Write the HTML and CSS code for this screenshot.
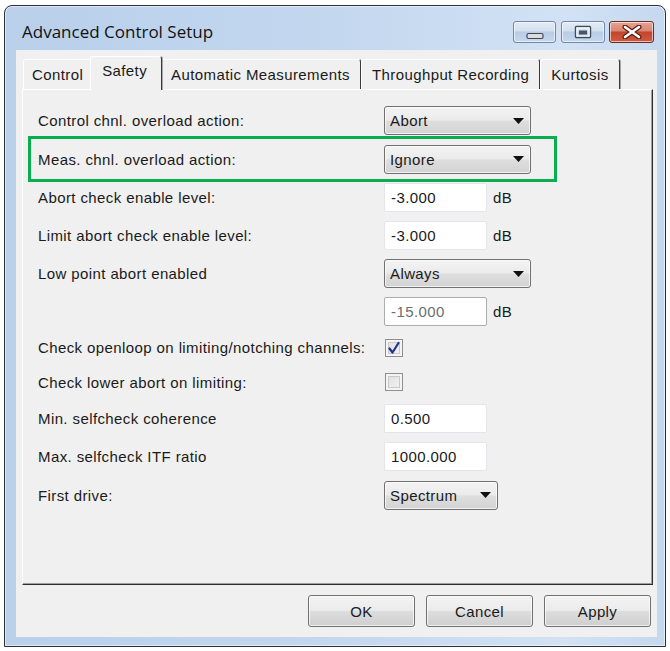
FILE: index.html
```html
<!DOCTYPE html>
<html>
<head>
<meta charset="utf-8">
<link rel="stylesheet" href="styles.css">
</head>
<body>
<div class="window">
  <div class="titlebar">
    <div class="title">Advanced Control Setup</div>
    <div class="caption-buttons">
      <div class="cbtn cbtn-min">
        <svg width="18" height="8" viewBox="0 0 18 8"><rect x="1" y="1.5" width="16" height="5" rx="1.5" fill="#dcdcdc" stroke="#3f4a58" stroke-width="1.2"/></svg>
      </div>
      <div class="cbtn cbtn-max">
        <svg width="18" height="14" viewBox="0 0 18 14"><rect x="1.5" y="1.5" width="15" height="11" rx="1" fill="none" stroke="#3f4a58" stroke-width="1.4"/><rect x="3" y="3" width="12" height="8" fill="none" stroke="#f4f6f8" stroke-width="1.4"/><rect x="5" y="5.5" width="8" height="4" fill="#4a5666"/></svg>
      </div>
      <div class="cbtn cbtn-close">
        <svg width="20" height="14" viewBox="0 0 20 14"><path d="M3 2 L17 12 M17 2 L3 12" stroke="#5a1e14" stroke-width="5" stroke-linecap="round"/><path d="M3 2 L17 12 M17 2 L3 12" stroke="#ffffff" stroke-width="2.6" stroke-linecap="round"/></svg>
      </div>
    </div>
  </div>
  <div class="client">
    <div class="tabs">
      <div class="tab tab-first">Control</div>
      <div class="tab active">Safety</div>
      <div class="tab">Automatic Measurements</div>
      <div class="tab">Throughput Recording</div>
      <div class="tab">Kurtosis</div>
    </div>
    <div class="panel">
      <div class="form">
        <div class="row r39"><span class="label">Control chnl. overload action:</span><div class="combo"><span>Abort</span><svg class="arrow" width="11" height="6" viewBox="0 0 11 6"><polygon points="0,0 11,0 5.5,6" fill="#111"/></svg></div></div>
        <div class="row r38"><span class="label">Meas. chnl. overload action:</span><div class="combo"><span>Ignore</span><svg class="arrow" width="11" height="6" viewBox="0 0 11 6"><polygon points="0,0 11,0 5.5,6" fill="#111"/></svg></div></div>
        <div class="row r38"><span class="label">Abort check enable level:</span><div class="field"><div class="input">-3.000</div><span class="unit">dB</span></div></div>
        <div class="row r38"><span class="label">Limit abort check enable level:</span><div class="field"><div class="input">-3.000</div><span class="unit">dB</span></div></div>
        <div class="row r39"><span class="label">Low point abort enabled</span><div class="combo"><span>Always</span><svg class="arrow" width="11" height="6" viewBox="0 0 11 6"><polygon points="0,0 11,0 5.5,6" fill="#111"/></svg></div></div>
        <div class="row r37"><span class="label"></span><div class="field"><div class="input disabled">-15.000</div><span class="unit">dB</span></div></div>
        <div class="row r35"><span class="label">Check openloop on limiting/notching channels:</span><div class="check"><svg width="16" height="16" viewBox="0 0 16 16"><path d="M3.5 8.5 L6.5 12.5 L12.5 3" fill="none" stroke="#22348c" stroke-width="2.2" stroke-linejoin="round" stroke-linecap="round"/></svg></div></div>
        <div class="row r34"><span class="label">Check lower abort on limiting:</span><div class="check"></div></div>
        <div class="row r38"><span class="label">Min. selfcheck coherence</span><div class="field"><div class="input">0.500</div></div></div>
        <div class="row r39"><span class="label">Max. selfcheck ITF ratio</span><div class="field"><div class="input">1000.000</div></div></div>
        <div class="row r38"><span class="label">First drive:</span><div class="combo small"><span>Spectrum</span><svg class="arrow" width="11" height="6" viewBox="0 0 11 6"><polygon points="0,0 11,0 5.5,6" fill="#111"/></svg></div></div>
      </div>
      <div class="highlight"></div>
    </div>
    <div class="buttons">
      <div class="btn">OK</div>
      <div class="btn">Cancel</div>
      <div class="btn">Apply</div>
    </div>
  </div>
</div>
</body>
</html>
```
FILE: styles.css
```css
html, body {
  margin: 0;
  padding: 0;
  background: #ffffff;
}
body {
  font-family: "Liberation Sans", Arial, sans-serif;
  font-size: 15px;
  letter-spacing: 0.4px;
  color: #1a1a1a;
}
.window {
  box-sizing: border-box;
  margin: 5px 0 0 4px;
  width: 662px;
  height: 642px;
  border: 1px solid #2c2f33;
  border-radius: 8px 8px 0 0;
  background: linear-gradient(90deg, #b9cfea 0%, #c3d7ef 50%, #d2e2f4 85%, #c4d8ef 100%);
  box-shadow: inset 0 0 0 1px rgba(255,255,255,0.55);
  display: flex;
  flex-direction: column;
}
.titlebar {
  height: 44px;
  display: flex;
  align-items: flex-start;
  justify-content: space-between;
  padding: 0 11px 0 17px;
}
.title {
  font-family: "Open Sans", "Noto Sans", sans-serif;
  font-size: 17px;
  letter-spacing: 0;
  color: #111;
  margin-top: 14px;
}
.caption-buttons {
  display: flex;
  margin-top: 15px;
}
.cbtn {
  height: 22px;
  box-sizing: border-box;
  border: 1px solid #6f87a8;
  border-radius: 3px;
  display: flex;
  align-items: center;
  justify-content: center;
  background: linear-gradient(180deg, #e3ecf7 0%, #d3e0f0 45%, #b9cce4 50%, #c6d8ee 100%);
  box-shadow: inset 0 0 0 1px rgba(255,255,255,0.6);
}
.cbtn-min { width: 43px; margin-right: 5px; }
.cbtn-min svg { margin-top: 7px; }
.cbtn-max { width: 44px; margin-right: 4px; }
.cbtn-close {
  width: 45px;
  border-color: #6b2a22;
  background: linear-gradient(180deg, #e8a291 0%, #d98673 45%, #c3452f 50%, #cf5a3e 100%);
}
.client {
  flex: 1;
  margin: 0 8px 9px 11px;
  background: #f0f0f0;
  padding: 7px 4px 0 6px;
  display: flex;
  flex-direction: column;
}
.tabs {
  display: flex;
  align-items: flex-end;
  height: 33px;
  padding-left: 1px;
}
.tab {
  box-sizing: border-box;
  height: 31px;
  padding: 0 10px 2px 10px;
  display: flex;
  align-items: center;
  border-top: 1px solid #ffffff;
  border-left: 1px solid #ffffff;
  border-right: 1px solid #3a3a3a;
  box-shadow: 1px 0 0 #a8a8a8;
  border-radius: 3px 3px 0 0;
  background: #f0f0f0;
  position: relative;
}
.tab.tab-first {
  padding: 0 8px 2px 8px;
}
.tab.active {
  height: 34px;
  margin: 0 -2px 0 -2px;
  padding: 0 14px 6px 11px;
  z-index: 2;
}
.panel {
  box-sizing: border-box;
  height: 496px;
  margin-top: -1px;
  border-top: 1px solid #ffffff;
  border-left: 1px solid #ffffff;
  border-right: 1px solid #2e2e2e;
  border-bottom: 1px solid #2e2e2e;
  box-shadow: inset -1px -1px 0 #a0a0a0;
  position: relative;
  z-index: 1;
}
.form {
  padding: 11px 0 0 15px;
  display: flex;
  flex-direction: column;
}
.row {
  display: grid;
  grid-template-columns: 346px auto;
  align-items: center;
}
.r34 { height: 34px; }
.r35 { height: 35px; }
.r37 { height: 37px; }
.r38 { height: 38px; }
.r39 { height: 39px; }
.label { white-space: nowrap; }
.combo {
  box-sizing: border-box;
  width: 147px;
  height: 29px;
  border: 1px solid #707070;
  border-radius: 3px;
  background: linear-gradient(180deg, #f3f3f3 0%, #ebebeb 48%, #dedede 52%, #d3d3d3 100%);
  box-shadow: inset 0 0 0 1px rgba(255,255,255,0.7);
  display: flex;
  align-items: center;
  justify-content: space-between;
  padding: 0 6px 0 5px;
}
.combo.small { width: 114px; }
.combo .arrow { flex: none; }
.field {
  display: flex;
  align-items: center;
}
.input {
  box-sizing: border-box;
  width: 103px;
  height: 29px;
  background: #ffffff;
  border: 1px solid #e3e5ea;
  border-radius: 2px;
  padding: 0 6px;
  display: flex;
  align-items: center;
}
.input.disabled {
  border-color: #acacac;
  color: #6d6d6d;
}
.unit {
  margin-left: 6px;
}
.check {
  box-sizing: border-box;
  width: 18px;
  height: 18px;
  margin-left: 1px;
  border: 1px solid #8e8f8f;
  background: linear-gradient(135deg, #dcdcdc 0%, #f6f6f6 100%);
  box-shadow: inset 0 0 0 2px #f4f4f4, inset 0 0 0 3px #c9c9c9;
  display: flex;
  align-items: center;
  justify-content: center;
}
.highlight {
  position: absolute;
  left: 5px;
  top: 46px;
  width: 529px;
  height: 46px;
  box-sizing: border-box;
  border: 3px solid #0aae4e;
  pointer-events: none;
}
.buttons {
  display: flex;
  justify-content: flex-end;
  gap: 11px;
  margin-top: 10px;
  padding-right: 2px;
}
.btn {
  box-sizing: border-box;
  width: 107px;
  height: 32px;
  border: 1px solid #707070;
  border-radius: 3px;
  background: linear-gradient(180deg, #f3f3f3 0%, #ebebeb 48%, #dddddd 52%, #cfcfcf 100%);
  box-shadow: inset 0 0 0 1px rgba(255,255,255,0.7);
  display: flex;
  align-items: center;
  justify-content: center;
}
```
